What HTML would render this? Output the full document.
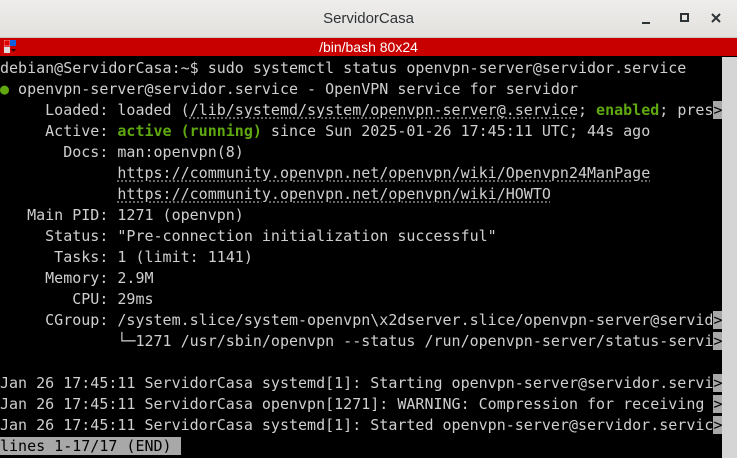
<!DOCTYPE html>
<html><head><meta charset="utf-8"><style>
html,body{margin:0;padding:0;width:737px;height:458px;overflow:hidden;background:#000;}
#title{position:absolute;left:0;top:0;width:737px;height:37px;background:linear-gradient(#efedeb,#e3e1de);border-bottom:1px solid #c9c7c4;font:15px "Liberation Sans","DejaVu Sans",sans-serif;color:#2e3436;}
#title .t{position:absolute;left:0;width:737px;top:10px;text-align:center;}
#title .b{position:absolute;}
#red{position:absolute;left:0;top:38px;width:737px;height:18px;background:#c90000;color:#fff;font:14px "Liberation Sans","DejaVu Sans",sans-serif;}
#red .t{position:absolute;left:0;width:737px;text-align:center;top:1px;}
#term{position:absolute;left:0;top:58px;width:722px;height:400px;background:#000;}
pre{margin:0;font:15px/21px "DejaVu Sans Mono","Liberation Mono",monospace;color:#cfcfcf;white-space:pre;}
.g{color:#5fa80f;font-weight:bold}
.gd{color:#5fa80f}
.u{text-decoration:underline dotted #8a8a8a;text-underline-offset:3px}
.m{background:#a8a8a8;color:#000}
.a{background:#a8a8a8;color:#000}
#sb{position:absolute;left:722px;top:57px;width:15px;height:401px;background:#d5d5d5;}
</style></head><body>
<div id="title"><div class="t">ServidorCasa</div>
<div class="b" style="left:642px;top:22px;width:8px;height:2px;background:#2e3436"></div>
<div class="b" style="left:680px;top:13px;width:5px;height:5px;border:2px solid #2e3436"></div>
<svg class="b" style="left:711px;top:13px" width="10" height="10"><path d="M1 1L9 9M9 1L1 9" stroke="#2e3436" stroke-width="2"/></svg>
</div>
<div id="red">
<svg style="position:absolute;left:4px;top:2px" width="12" height="14"><rect x="0" y="0" width="6" height="6" fill="#e00000" stroke="#fff" stroke-width=".5"/><rect x="6" y="0" width="6" height="6" fill="#1060e0"/><rect x="0" y="7" width="6" height="6" fill="#ddd"/><path d="M7 9h5l-2.5 3z" fill="#300"/></svg>
<div class="t">/bin/bash 80x24</div></div>
<div id="term"><pre>debian@ServidorCasa:~$ sudo systemctl status openvpn-server@servidor.service
<span class="gd">●</span> openvpn-server@servidor.service - OpenVPN service for servidor
     Loaded: loaded (<span class="u">/lib/systemd/system/openvpn-server@.service</span>; <span class="g">enabled</span>; pres<span class="a">&gt;</span>
     Active: <span class="g">active (running)</span> since Sun 2025-01-26 17:45:11 UTC; 44s ago
       Docs: man:openvpn(8)
             <span class="u">https://community.openvpn.net/openvpn/wiki/Openvpn24ManPage</span>
             <span class="u">https://community.openvpn.net/openvpn/wiki/HOWTO</span>
   Main PID: 1271 (openvpn)
     Status: "Pre-connection initialization successful"
      Tasks: 1 (limit: 1141)
     Memory: 2.9M
        CPU: 29ms
     CGroup: /system.slice/system-openvpn\x2dserver.slice/openvpn-server@servid<span class="a">&gt;</span>
             └─1271 /usr/sbin/openvpn --status /run/openvpn-server/status-servi<span class="a">&gt;</span>

Jan 26 17:45:11 ServidorCasa systemd[1]: Starting openvpn-server@servidor.servi<span class="a">&gt;</span>
Jan 26 17:45:11 ServidorCasa openvpn[1271]: WARNING: Compression for receiving <span class="a">&gt;</span>
Jan 26 17:45:11 ServidorCasa systemd[1]: Started openvpn-server@servidor.servic<span class="a">&gt;</span>
<span class="m">lines 1-17/17 (END) </span></pre></div>
<div id="sb"></div>
</body></html>
